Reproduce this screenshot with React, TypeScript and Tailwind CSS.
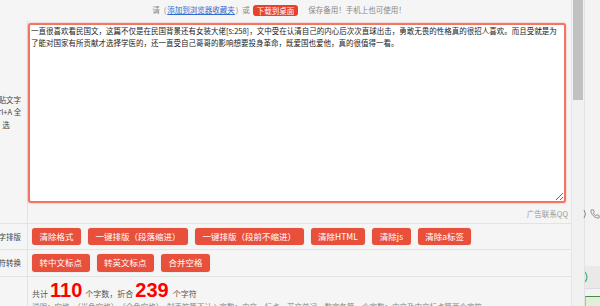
import React from "react";

const text =
  "一直很喜欢看民国文，这篇不仅是在民国背景还有女装大佬[s:258]，文中受在认清自己的内心后次次直球出击，勇敢无畏的性格真的很招人喜欢。而且受就是为\n了能对国家有所贡献才选择学医的，还一直受自己哥哥的影响想要投身革命，既爱国也爱他，真的很值得一看。";

function Btn({ children }: { children: React.ReactNode }) {
  return (
    <span className="h-[17.5px] leading-[17.5px] px-[7.5px] rounded-[3px] bg-[#e9503c] text-white text-[8.5px] whitespace-nowrap shadow-[0_0_1px_rgba(0,0,0,0.25)]">
      {children}
    </span>
  );
}

export default function App() {
  return (
    <div className="w-[600px] h-[306px] overflow-hidden bg-[#f5f5f5] flex font-['Noto_Sans_CJK_SC','Noto_Sans',sans-serif] text-[#333]">
      {/* main scroll area */}
      <div className="w-[572px] h-full overflow-hidden border-r border-[#e6e6e6] shrink-0">
        <div className="ml-[-15px] w-[586px]">
          {/* top row */}
          <div className="h-[20px] flex items-center justify-center text-[7.5px] text-[#888] whitespace-nowrap pl-[2px]">
            <span>请</span>
            <span className="ml-[4px]">(</span>
            <span className="text-[#2f6bd0] underline mx-[1px]">添加到浏览器收藏夹</span>
            <span>)</span>
            <span className="ml-[4px]">或</span>
            <span className="ml-[3px] h-[11px] leading-[11px] px-[4px] rounded-[3px] bg-[#e8412c] text-white">
              下载到桌面
            </span>
            <span className="ml-[10px]">保存备用！手机上也可使用！</span>
          </div>

          {/* textarea row */}
          <div className="flex h-[185px]">
            <div className="w-[43px] shrink-0 border-r border-[#e3e3e3] flex items-center justify-center text-center text-[7.5px] leading-[12.5px] text-[#444]">
              <div>
                粘贴文字
                <br />
                Ctrl+A 全
                <br />
                选
              </div>
            </div>
            <div className="flex-1 pt-[3px] pl-[0px] pr-[6px]">
              <textarea
                readOnly
                wrap="off"
                value={text}
                className="block w-[538px] h-[180px] border-2 border-[#f07564] rounded-[3px] bg-white text-[7.5px] leading-[12px] text-[#222] px-[1px] py-0 overflow-hidden resize-y outline-none shadow-[0_0_2px_rgba(240,100,85,0.6)] font-['Noto_Sans_CJK_SC',sans-serif]"
              />
            </div>
          </div>

          {/* ad row */}
          <div className="flex h-[19px] border-b border-[#e3e3e3]">
            <div className="w-[43px] shrink-0 border-r border-[#e3e3e3]" />
            <div className="flex-1 flex items-center justify-end pr-[3px] text-[7.5px] text-[#999]">
              广告联系QQ
            </div>
          </div>

          {/* format row */}
          <div className="flex h-[26px] border-b border-[#e3e3e3]">
            <div className="w-[43px] shrink-0 border-r border-[#e3e3e3] flex items-center justify-center text-[7.5px] text-[#444]">
              文字排版
            </div>
            <div className="flex-1 flex items-center gap-[7px] pl-[4px]">
              <Btn>清除格式</Btn>
              <Btn>一键排版（段落缩进）</Btn>
              <Btn>一键排版（段前不缩进）</Btn>
              <Btn>清除HTML</Btn>
              <Btn>清除js</Btn>
              <Btn>清除a标签</Btn>
            </div>
          </div>

          {/* convert row */}
          <div className="flex h-[27px] border-b border-[#e3e3e3]">
            <div className="w-[43px] shrink-0 border-r border-[#e3e3e3] flex items-center justify-center text-[7.5px] text-[#444]">
              字符转换
            </div>
            <div className="flex-1 flex items-center gap-[7px] pl-[4px]">
              <Btn>转中文标点</Btn>
              <Btn>转英文标点</Btn>
              <Btn>合并空格</Btn>
            </div>
          </div>

          {/* count row */}
          <div className="flex h-[60px]">
            <div className="w-[43px] shrink-0 border-r border-[#e3e3e3]" />
            <div className="flex-1 pl-[4px] pt-[3px]">
              <div className="flex items-baseline h-[21px] text-[8px] text-[#555] whitespace-nowrap">
                <span>共计</span>
                <span className="ml-[2px] text-[20px] leading-[20px] font-bold text-[#ff0000] font-['Liberation_Sans',Arial,sans-serif]">
                  110
                </span>
                <span className="ml-[3px]">个字数，折合</span>
                <span className="ml-[2px] text-[20px] leading-[20px] font-bold text-[#ff0000] font-['Liberation_Sans',Arial,sans-serif]">
                  239
                </span>
                <span className="ml-[4px]">个字符</span>
              </div>
              <div className="mt-[1px] text-[7.5px] leading-[10px] text-[#888] whitespace-nowrap">
                说明：空格、（半角空格）、（全角空格）、制表符等不计入字数；中文、标点、英文单词、数字各算一个字数；中文及中文标点算两个字符
              </div>
            </div>
          </div>
        </div>
      </div>

      {/* scrollbar */}
      <div className="w-[13px] h-full shrink-0 bg-[#f1f1f1] border-r border-[#e2e2e2] pl-[1px]">
        <div className="w-[10px] h-[100px] bg-[#c1c1c1]" />
      </div>

      {/* right strip */}
      <div className="flex-1 h-full bg-[#f3f3f3] flex flex-col">
        <div className="h-[205px]" />
        <div className="h-[18px] flex items-center gap-[3px] -ml-[2px]">
          <svg width="4" height="10" viewBox="0 0 4 10">
            <path d="M1 1 Q4 5 1 9" stroke="#888" strokeWidth="1" fill="none" />
          </svg>
          <svg width="10" height="10" viewBox="0 0 24 24" fill="none" stroke="#777" strokeWidth="2">
            <path d="M22 16.9v3a2 2 0 0 1-2.2 2 19.8 19.8 0 0 1-8.6-3.1 19.5 19.5 0 0 1-6-6A19.8 19.8 0 0 1 2.1 4.2 2 2 0 0 1 4.1 2h3a2 2 0 0 1 2 1.7c.1 1 .4 1.9.7 2.8a2 2 0 0 1-.5 2.1L8 9.9a16 16 0 0 0 6 6l1.3-1.3a2 2 0 0 1 2.1-.4c.9.3 1.8.6 2.8.7a2 2 0 0 1 1.7 2z" />
          </svg>
        </div>
        <div className="h-[43px]" />
        <div className="h-[22px] bg-[#e9e9e9] flex items-center">
          <svg width="4" height="12" viewBox="0 0 4 12">
            <path d="M0 1 Q4 6 0 11" stroke="#3cb371" strokeWidth="1.2" fill="none" />
          </svg>
        </div>
        <div className="h-[8px] border-t border-[#dcdcdc]" />
        <div className="flex-1 bg-[#dff0d8] border-t border-[#4a8a4a] border-l border-l-[#9ccc9c]" />
      </div>
    </div>
  );
}
